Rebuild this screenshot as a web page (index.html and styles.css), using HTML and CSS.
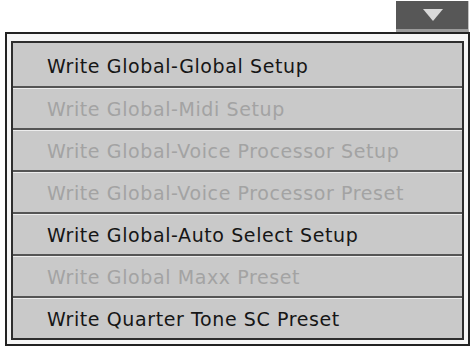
FILE: index.html
```html
<!DOCTYPE html>
<html>
<head>
<meta charset="utf-8">
<link rel="stylesheet" href="styles.css">
</head>
<body>
<div class="top">
  <div class="drop-btn">
    <svg class="tri" width="20" height="13" viewBox="0 0 20 13"><polygon points="0,0 20,0 10,12" fill="#d9d9d9"/></svg>
  </div>
</div>
<div class="frame">
  <div class="list">
    <div class="row first">Write Global-Global Setup</div>
    <div class="row off">Write Global-Midi Setup</div>
    <div class="row off">Write Global-Voice Processor Setup</div>
    <div class="row off">Write Global-Voice Processor Preset</div>
    <div class="row">Write Global-Auto Select Setup</div>
    <div class="row off">Write Global Maxx Preset</div>
    <div class="row last">Write Quarter Tone SC Preset</div>
  </div>
</div>
</body>
</html>
```
FILE: styles.css
```css
html, body {
  margin: 0;
  padding: 0;
  background: #ffffff;
  width: 473px;
  height: 346px;
  overflow: hidden;
}
.top {
  display: flex;
  justify-content: flex-end;
  padding: 1px 4px 0 0;
}
.drop-btn {
  width: 72px;
  height: 28px;
  background: #575757;
  border-bottom: 3px solid #9b9b9b;
  border-right: 1px solid #c4c4c4;
  display: flex;
  align-items: center;
  justify-content: center;
}
.tri {
  display: block;
  margin-left: 1px;
}
.frame {
  margin: 0 3px 0 5px;
  border: 2px solid #222222;
  padding: 7px 4px 4px 4px;
  background: #f6f6f6;
}
.list {
  border: 2px solid #2e2e2e;
  background: #c9c9c9;
  display: flex;
  flex-direction: column;
}
.row {
  height: 39px;
  border-top: 1px solid #ededed;
  border-bottom: 2px solid #555555;
  display: flex;
  align-items: center;
  padding-left: 34px;
  font-family: "DejaVu Sans", sans-serif;
  font-size: 19px;
  color: #161616;
  letter-spacing: 0.6px;
}
.row.first {
  border-top: none;
  height: 41px;
  padding-top: 2px;
  box-sizing: content-box;
}
.row.last {
  border-bottom: none;
}
.row.off {
  color: #a3a3a3;
}
```
